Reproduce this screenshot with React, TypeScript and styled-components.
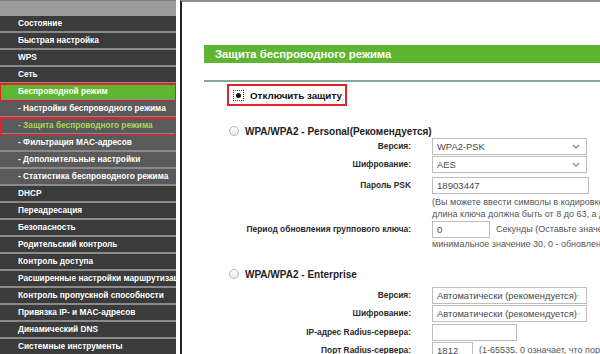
import React from "react";
import styled, { createGlobalStyle } from "styled-components";

const GlobalStyle = createGlobalStyle`
  html, body {
    margin: 0;
    padding: 0;
    background: #fff;
    overflow: hidden;
  }
  body {
    font-family: "Liberation Sans", Arial, sans-serif;
  }
`;

const Page = styled.div`
  display: flex;
  flex-flow: row nowrap;
  width: 600px;
  height: 354px;
  overflow: hidden;
`;

const Sidebar = styled.nav`
  flex: 0 0 176px;
  width: 176px;
  background: #3b3b3b;
  margin-right: 4px;
  overflow: hidden;
`;

const SidebarHeader = styled.div`
  height: 15px;
  background: #9c9c9c;
  border-top: 1px solid #7c7c7c;
`;

const MenuItem = styled.div<{ $sub?: boolean; $active?: boolean; $current?: boolean; $marked?: boolean }>`
  height: 15px;
  padding-left: 18px;
  border-bottom: 2px solid #8a8a8a;
  background: ${({ $sub, $active }) => ($active ? "#5fb62f" : $sub ? "#5a5a5a" : "#3b3b3b")};
  color: ${({ $current }) => ($current ? "#a6d85a" : "#fff")};
  font: normal 700 8.3px/15px "Liberation Sans", Arial, sans-serif;
  white-space: nowrap;
  overflow: hidden;
  outline: ${({ $marked }) => ($marked ? "2px solid #e3202b" : "none")};
  outline-offset: -1px;
  position: relative;
`;

const Content = styled.main`
  flex: 1 1 auto;
  border-left: 2px solid #262626;
  border-top: 2px solid #8e8e8e;
  padding: 43px 0 0 22px;
  overflow: hidden;
  color: #222;
`;

const TitleBar = styled.div`
  height: 18px;
  background: #5eb532;
  color: #fff;
  padding-left: 11px;
  font: normal 700 11.3px/18px "Liberation Sans", Arial, sans-serif;
  white-space: nowrap;
`;

const Rule = styled.div`
  margin-top: 17px;
  height: 2px;
  background: #86a898;
`;

const DisableOption = styled.div`
  display: inline-flex;
  align-items: center;
  gap: 6px;
  margin: 2px 0 0 23px;
  height: 18px;
  padding: 0 3px 0 4px;
  border: 2px solid #e3202b;
  font: normal 700 9.8px "Liberation Sans", Arial, sans-serif;
  color: #111;
`;

const RadioChecked = styled.span`
  width: 9px;
  height: 9px;
  border: 1px dotted #444;
  display: inline-flex;
  align-items: center;
  justify-content: center;
  &::after {
    content: "";
    width: 5px;
    height: 5px;
    border-radius: 50%;
    background: #111;
  }
`;

const Radio = styled.span`
  width: 10px;
  height: 10px;
  border-radius: 50%;
  border: 1px solid #b4b4b4;
  background: linear-gradient(#fff, #e8e8e8);
  box-sizing: border-box;
  flex: 0 0 auto;
`;

const SectionHeading = styled.div<{ $top: number }>`
  display: flex;
  align-items: center;
  gap: 6px;
  margin: ${({ $top }) => $top}px 0 0 25px;
  height: 16px;
  font: normal 700 10px "Liberation Sans", Arial, sans-serif;
  color: #222;
  white-space: nowrap;
`;

const Field = styled.div<{ $top?: number }>`
  display: flex;
  align-items: center;
  margin-top: ${({ $top = 0 }) => $top}px;
  height: 18px;
  white-space: nowrap;
`;

const Label = styled.label`
  flex: 0 0 207px;
  text-align: right;
  padding-right: 21px;
  box-sizing: content-box;
  font: normal 700 8.4px "Liberation Sans", Arial, sans-serif;
  color: #2a2a2a;
`;

const Select = styled.div<{ $w: number }>`
  width: ${({ $w }) => $w}px;
  height: 17px;
  box-sizing: border-box;
  border: 1px solid #bdbdbd;
  background: #fff;
  display: flex;
  align-items: center;
  justify-content: space-between;
  padding: 0 6px 0 4px;
  font: normal 400 9.4px "Liberation Sans", Arial, sans-serif;
  color: #4a4a4a;
`;

const Input = styled.div<{ $w: number }>`
  width: ${({ $w }) => $w}px;
  height: 17px;
  box-sizing: border-box;
  border: 1px solid #bdbdbd;
  background: #fff;
  padding: 0 4px;
  font: normal 400 9.6px/15px "Liberation Sans", Arial, sans-serif;
  color: #4a4a4a;
  flex: 0 0 auto;
`;

const Note = styled.span`
  margin-left: 6px;
  font: normal 400 9px "Liberation Sans", Arial, sans-serif;
  color: #555;
  white-space: nowrap;
`;

const HintBlock = styled.div<{ $top: number }>`
  margin: ${({ $top }) => $top}px 0 0 228px;
  font: normal 400 9px/12px "Liberation Sans", Arial, sans-serif;
  color: #555;
  white-space: nowrap;
`;

const Chevron = () => (
  <svg width="8" height="5" viewBox="0 0 8 5">
    <polyline points="1,1 4,4 7,1" fill="none" stroke="#8a8a8a" strokeWidth="1.3" />
  </svg>
);

const menu: { label: string; sub?: boolean; active?: boolean; current?: boolean; marked?: boolean }[] = [
  { label: "Состояние" },
  { label: "Быстрая настройка" },
  { label: "WPS" },
  { label: "Сеть" },
  { label: "Беспроводной режим", active: true, marked: true },
  { label: "- Настройки беспроводного режима", sub: true },
  { label: "- Защита беспроводного режима", sub: true, current: true, marked: true },
  { label: "- Фильтрация MAC-адресов", sub: true },
  { label: "- Дополнительные настройки", sub: true },
  { label: "- Статистика беспроводного режима", sub: true },
  { label: "DHCP" },
  { label: "Переадресация" },
  { label: "Безопасность" },
  { label: "Родительский контроль" },
  { label: "Контроль доступа" },
  { label: "Расширенные настройки маршрутизации" },
  { label: "Контроль пропускной способности" },
  { label: "Привязка IP- и MAC-адресов" },
  { label: "Динамический DNS" },
  { label: "Системные инструменты" },
];

export default function App() {
  return (
    <>
      <GlobalStyle />
      <Page>
        <Sidebar>
          <SidebarHeader />
          {menu.map((m) => (
            <MenuItem key={m.label} $sub={m.sub} $active={m.active} $current={m.current} $marked={m.marked}>
              {m.label}
            </MenuItem>
          ))}
        </Sidebar>
        <Content>
          <TitleBar>Защита беспроводного режима</TitleBar>
          <Rule />
          <DisableOption>
            <RadioChecked />
            Отключить защиту
          </DisableOption>

          <SectionHeading $top={17}>
            <Radio />
            WPA/WPA2 - Personal(Рекомендуется)
          </SectionHeading>
          <Field $top={-2}>
            <Label>Версия:</Label>
            <Select $w={155}>
              WPA2-PSK
              <Chevron />
            </Select>
          </Field>
          <Field>
            <Label>Шифрование:</Label>
            <Select $w={155}>
              AES
              <Chevron />
            </Select>
          </Field>
          <Field $top={3}>
            <Label>Пароль PSK</Label>
            <Input $w={157}>18903447</Input>
          </Field>
          <HintBlock $top={2}>
            <div>(Вы можете ввести символы в кодировке ASCII или в шестнадцатеричном формате,</div>
            <div>длина ключа должна быть от 8 до 63, а для шестнадцатеричного формата - 64.)</div>
          </HintBlock>
          <Field $top={0}>
            <Label>Период обновления группового ключа:</Label>
            <Input $w={58}>0</Input>
            <Note>Секунды (Оставьте значение по умолчанию, если не уверены,</Note>
          </Field>
          <HintBlock $top={0}>
            <div>минимальное значение 30, 0 - обновление отключено)</div>
          </HintBlock>

          <SectionHeading $top={16}>
            <Radio />
            WPA/WPA2 - Enterprise
          </SectionHeading>
          <Field $top={4}>
            <Label>Версия:</Label>
            <Select $w={155}>
              Автоматически (рекомендуется)
              <Chevron />
            </Select>
          </Field>
          <Field>
            <Label>Шифрование:</Label>
            <Select $w={155}>
              Автоматически (рекомендуется)
              <Chevron />
            </Select>
          </Field>
          <Field $top={1}>
            <Label>IP-адрес Radius-сервера:</Label>
            <Input $w={85} />
          </Field>
          <Field>
            <Label>Порт Radius-сервера:</Label>
            <Input $w={41}>1812</Input>
            <Note>(1-65535, 0 означает, что порт по умолчанию 1812)</Note>
          </Field>
        </Content>
      </Page>
    </>
  );
}
